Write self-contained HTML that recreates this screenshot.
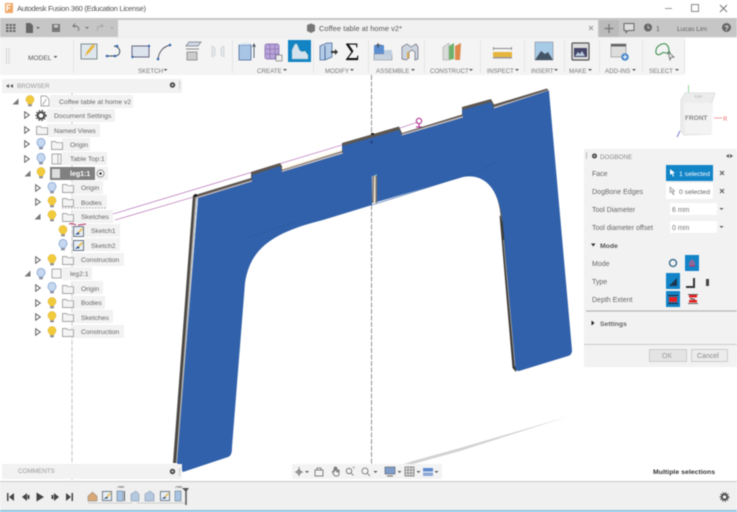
<!DOCTYPE html>
<html><head><meta charset="utf-8"><style>
html,body{margin:0;padding:0;background:#fff;width:737px;height:512px;overflow:hidden}
svg{display:block;filter:blur(.45px)}
text{font-family:"Liberation Sans",sans-serif;font-size:7px;fill:#666}
.t{font-size:6.8px;fill:#666}
.r{font-size:6.2px;fill:#777;text-anchor:middle}
.p{font-size:7px;fill:#666}
</style></head><body>
<svg width="737" height="512" viewBox="0 0 737 512" xmlns="http://www.w3.org/2000/svg">
<defs>
<symbol id="by" viewBox="0 0 10 12" overflow="visible"><path d="M5 .5a4 4 0 0 1 2.4 7.2L7 9H3l-.4-1.300A4 4 0 0 1 5 .5z" fill="#f2cb3c" stroke="#d8b030" stroke-width=".5"/><rect x="3.200" y="9.300" width="3.600" height="2" fill="#888"/></symbol>
<symbol id="bb" viewBox="0 0 10 12" overflow="visible"><path d="M5 .5a4 4 0 0 1 2.4 7.2L7 9H3l-.4-1.300A4 4 0 0 1 5 .5z" fill="#c6d8f0" stroke="#7d9fd0" stroke-width=".7"/><rect x="3.200" y="9.300" width="3.600" height="2" fill="#889"/></symbol>
<symbol id="fo" viewBox="0 0 12 10" overflow="visible"><path d="M.5 1.500h4l1 1.200h6v6.800H.5z" fill="#f4f4f4" stroke="#888" stroke-width=".7"/></symbol>
<symbol id="tr" viewBox="0 0 6 8" overflow="visible"><path d="M.7.700L5.300 4 .7 7.300z" fill="#fff" stroke="#555" stroke-width=".9"/></symbol>
<symbol id="te" viewBox="0 0 7 7" overflow="visible"><path d="M6.500.5v6H.5z" fill="#777"/></symbol>
<symbol id="sk" viewBox="0 0 11 11" overflow="visible"><rect x=".5" y=".5" width="10" height="10" fill="#e8eef6" stroke="#456" stroke-width=".8"/><path d="M2 9l3-3 2 2z" fill="#2c4f8f"/><path d="M5 6l4-4 1 1-4 4z" fill="#e8b52c"/></symbol>
</defs>

<rect width="737" height="512" fill="#fff"/>

<!-- Title bar -->
<rect x="5" y="3" width="8" height="10" fill="#f0a868"/>
<path d="M7 11V5h4M7 8h3" stroke="#fff" stroke-width="1.200" fill="none"/>
<text x="17" y="11" style="font-size:7.700px;fill:#555" textLength="129">Autodesk Fusion 360 (Education License)</text>
<path d="M665 8.500h7" stroke="#999"/>
<rect x="691.500" y="4.500" width="7" height="7" fill="none" stroke="#888"/>
<path d="M720 5l7 7M727 5l-7 7" stroke="#777"/>

<!-- Dark toolbar -->
<rect y="18" width="737" height="19" fill="#c6c6c6"/>
<rect x="118" y="20" width="480" height="17" fill="#f1f1f1"/>
<rect x="0" y="37" width="737" height="1" fill="#eee"/>
<g fill="#666"><rect x="6" y="24" width="2.500" height="2"/><rect x="9.500" y="24" width="2.500" height="2"/><rect x="13" y="24" width="2.500" height="2"/><rect x="6" y="27" width="2.500" height="2"/><rect x="9.500" y="27" width="2.500" height="2"/><rect x="13" y="27" width="2.500" height="2"/><rect x="6" y="30" width="2.500" height="2"/><rect x="9.500" y="30" width="2.500" height="2"/><rect x="13" y="30" width="2.500" height="2"/></g>
<path d="M26 23h4.500l2.500 2.500V33h-7z" fill="#666"/><path d="M36 27l2 2 2-2z" fill="#666"/>
<rect x="52" y="24" width="8" height="8" fill="#777"/><rect x="54" y="25" width="4" height="2.500" fill="#ccc"/>
<path d="M77 26h-4l2-2.500M73 26l2 1.500M73.500 26c4-.5 6 1.500 5 5" fill="none" stroke="#777" stroke-width="1"/><path d="M85 27l2 2 2-2z" fill="#777"/>
<path d="M99 26h4l-2-2.500M103 26l-2 1.500M102.500 26c-4-.5-6 1.500-5 5" fill="none" stroke="#aaa" stroke-width="1"/><path d="M110 27l2 2 2-2z" fill="#aaa"/>
<path d="M307 25l4-1.500 4 1.500v6l-4 2-4-2z" fill="#777"/>
<text x="319" y="31" class="t" style="font-size:7.400px;fill:#555" textLength="83">Coffee table at home v2*</text>
<path d="M589 26l4 4M593 26l-4 4" stroke="#999" stroke-width="1"/>
<rect x="599" y="20" width="20" height="17" fill="#bbb"/>
<path d="M609 24v9M604.500 28.500h9" stroke="#777" stroke-width="1.300"/>
<path d="M624 23.500h10v7h-6l-2 2v-2h-2z" fill="#ddd" stroke="#666"/>
<circle cx="648" cy="27.500" r="4" fill="#666"/><path d="M648 25v3h2" stroke="#ddd" fill="none" stroke-width=".7"/>
<text x="656" y="31" style="fill:#666">1</text>
<text x="677" y="31" style="font-size:6.800px;fill:#666" textLength="30">Lucas Lim</text>
<circle cx="726.500" cy="27.500" r="4.500" fill="#666"/><text x="724.500" y="30.500" style="font-size:7px;fill:#eee;font-weight:bold">?</text>

<!-- Ribbon -->
<rect x="0" y="38" width="685" height="37" fill="#f4f4f4"/>
<path d="M6.500 48v16M9 48v16" stroke="#d6d6d6"/>
<text x="28" y="60" style="font-size:6.600px;fill:#555">MODEL</text><path d="M53.500 56l2 2 2-2z" fill="#555"/>
<g stroke="#e4e4e4"><path d="M73.500 40v33M232.500 40v33M313.500 40v33M368.500 40v33M424.500 40v33M480.500 40v33M524.500 40v33M564.500 40v33M599.500 40v33M642.500 40v33M684.500 40v33"/></g>

<!-- sketch icons -->
<rect x="81" y="44" width="16" height="15" fill="#dfe6ee" stroke="#677" stroke-width=".8"/><path d="M85 56l2-5 6-7 2 2-6 7z" fill="#e8b840"/>
<path d="M107 56h8c6 0 7-9-1-10" fill="none" stroke="#345" stroke-width=".9"/><circle cx="107" cy="56" r="1.300" fill="#3567b0"/><circle cx="115" cy="56" r="1.300" fill="#3567b0"/><circle cx="117" cy="46" r="1.300" fill="#3567b0"/>
<rect x="132" y="46" width="17" height="11" fill="#dde4ee" stroke="#446" stroke-width=".8"/><circle cx="132.500" cy="57" r="1.200" fill="#3567b0"/><circle cx="149" cy="46" r="1.200" fill="#3567b0"/>
<path d="M158 59c1-8 6-13 13-14" fill="none" stroke="#445" stroke-width=".9"/><circle cx="158" cy="59" r="1.300" fill="#3567b0"/><circle cx="170" cy="45" r="1.300" fill="#3567b0"/>
<path d="M186 46l3-4h12l-3 4z" fill="#cfd8e4" stroke="#778" stroke-width=".7"/><rect x="187" y="52" width="10" height="8" fill="#ccc" stroke="#777" stroke-width=".7"/><path d="M186 49h13" stroke="#888"/>
<path d="M212 46v11l3-2v-7zM224 46v11l-3-2v-7z" fill="#e3e7ec" stroke="#ccc" stroke-width=".7"/>
<text x="138" y="73" style="font-size:6.200px;fill:#777">SKETCH</text><path d="M163.500 69l2 2 2-2z" fill="#555"/>
<!-- create -->
<rect x="239" y="45" width="12" height="15" fill="#a9c5e6" stroke="#4a6c99" stroke-width=".8"/><path d="M239 45l3-2h9l-1 2z" fill="#d5e3f3"/><path d="M254 58V45M252.500 47l1.500-3 1.500 3" stroke="#345" fill="none" stroke-width=".8"/>
<rect x="265" y="44" width="14" height="15" rx="2" fill="#b8a4d8" stroke="#7a5ea8" stroke-width=".7"/><path d="M265 49h14M265 54h14M270 44v15M275 44v15" stroke="#7a5ea8" stroke-width=".5"/><rect x="276" y="55" width="6" height="6" fill="#eee" stroke="#666" stroke-width=".6"/>
<rect x="288" y="40" width="23" height="22" fill="#1284c4"/>
<path d="M292 59v-9l3-6h2l2 5c1 3 4 3 6 2l3 4v4z" fill="#d5e3ee" stroke="#9bb" stroke-width=".5"/>
<text x="257" y="73" style="font-size:6.200px;fill:#777">CREATE</text><path d="M283 69l2 2 2-2z" fill="#555"/>
<!-- modify -->
<path d="M320 46l7-3h5v14l-7 3h-5z" fill="#b3cbe7" stroke="#4a6c99" stroke-width=".8"/><path d="M325 46v14" stroke="#4a6c99"/><path d="M331 51h4v-2l3 3-3 3v-2h-4z" fill="#333"/>
<text x="345" y="60" style="font-size:25px;fill:#111;font-family:'Liberation Serif',serif">Σ</text>
<text x="325" y="73" style="font-size:6.200px;fill:#777">MODIFY</text><path d="M350 69l2 2 2-2z" fill="#555"/>
<!-- assemble -->
<rect x="374" y="45" width="10" height="9" fill="#5b8ed0"/><path d="M374 54h18v6h-18z" fill="#c8d3e0" stroke="#889" stroke-width=".6"/><rect x="384" y="50" width="8" height="6" fill="#c0cfe0"/><path d="M378 43v5M376 45h5" stroke="#333" stroke-width=".8"/>
<path d="M402 59v-12l5-3 4 3 5-3 2 3v12l-3 1v-8l-3-2-3 2v6l-3 2z" fill="#ccd5df" stroke="#667" stroke-width=".7"/><path d="M408 52v6" stroke="#d8a848" stroke-width="2"/>
<text x="376" y="73" style="font-size:6.200px;fill:#777">ASSEMBLE</text><path d="M411 69l2 2 2-2z" fill="#555"/>
<!-- construct -->
<path d="M443 47l6-4v17l-6 0z" fill="#d8dbd8" stroke="#999" stroke-width=".5"/><path d="M449 46l5-3v16l-5 1z" fill="#6fb16c"/><path d="M455 46l6-3-1 17-5 0z" fill="#de8a4c"/>
<text x="430" y="73" style="font-size:6.200px;fill:#777">CONSTRUCT</text><path d="M469 69l2 2 2-2z" fill="#555"/>
<!-- inspect -->
<path d="M493.500 47v3M511.500 47v3M494 48.500h17" stroke="#666" stroke-width=".7"/><rect x="493" y="52" width="19" height="5" fill="#e6b53c"/><rect x="493" y="57" width="19" height="1.500" fill="#999"/>
<text x="487" y="73" style="font-size:6.200px;fill:#777">INSPECT</text><path d="M515 69l2 2 2-2z" fill="#555"/>
<!-- insert -->
<rect x="535" y="42" width="18" height="18" fill="#a7cbe6" stroke="#889" stroke-width=".6"/><path d="M535 60l6-9 4 3 3-2 5 8z" fill="#456"/>
<text x="531" y="73" style="font-size:6.200px;fill:#777">INSERT</text><path d="M554 69l2 2 2-2z" fill="#555"/>
<!-- make -->
<rect x="572" y="43" width="17" height="17" rx="1" fill="#ddd" stroke="#555" stroke-width="1.200"/><rect x="574" y="48" width="13" height="9" fill="#446"/><path d="M575 56l3-4 2 2 2-3 3 5z" fill="#bcd"/>
<text x="569" y="73" style="font-size:6.200px;fill:#777">MAKE</text><path d="M588 69l2 2 2-2z" fill="#555"/>
<!-- add-ins -->
<rect x="611" y="44" width="15" height="13" fill="#ddd" stroke="#888" stroke-width=".6"/><rect x="611" y="44" width="15" height="2.500" fill="#666"/><circle cx="625" cy="57" r="3.800" fill="#4a8ac8"/><path d="M625 55v4M623 57h4" stroke="#fff"/>
<text x="605" y="73" style="font-size:6.200px;fill:#777">ADD-INS</text><path d="M632 69l2 2 2-2z" fill="#555"/>
<!-- select -->
<path d="M656 50c1-5 8-8 11-5s1 6 3 8c-3 2-5-2-8 0-3 3-7 2-6-3z" fill="none" stroke="#3b8f4d" stroke-width="1.100"/><path d="M668 52l6 5-3 .5-1 2.500z" fill="#eee" stroke="#555" stroke-width=".7"/>
<text x="649" y="73" style="font-size:6.200px;fill:#777">SELECT</text><path d="M675 69l2 2 2-2z" fill="#555"/>

<!-- Canvas axes -->
<path d="M371.500 75V470" stroke="#777" stroke-width=".8" stroke-dasharray="5 1.500"/>
<path d="M72 93V480" stroke="#aaa" stroke-width=".7" stroke-dasharray="5 1.500"/>
<path d="M688.500 85v8" stroke="#8fd79a" stroke-width="1"/>

<!-- Ground shadow -->
<path d="M568 416.500L460 448 413 461 357 479 413 464 460 451z" fill="#d2d2d2"/>

<!-- Magenta sketch lines -->
<path d="M113 214L342 145M400 128L418 122M115 220L197 196" fill="none" stroke="#a855a8" stroke-width=".6"/>
<circle cx="419" cy="121" r="2.700" fill="none" stroke="#b0258f" stroke-width="1"/><path d="M416 127h6M419 124v3" stroke="#b0258f"/>

<!-- Part top side bands -->
<path d="M195 195L251 178V172L280 163 282 166 282 171 197 198z" fill="#5d5650"/>
<path d="M282 169.500L342 151V143L399 126.500 402 133 402 135 282 172z" fill="#5d5650"/>
<path d="M402 133L462 114.500V107L491 99 494 104.500 547 88.500 549 91 402 136z" fill="#5d5650"/>
<path d="M197 197L251 180.500 252 182 197 199zM282 170.500L342 152 343 154 282 172.500zM402 134L463 116 463 118 402 136zM494 107L548 90 548 92 494 109z" fill="#c9bfc0"/>
<path d="M283 167.500L342 149 342 151 283 169.500z" fill="#fff8e8"/>
<path d="M193 195L173 463 177 463 197 197z" fill="#4b4844"/>
<path d="M195.500 196L176 463 178 463 197 197z" fill="#b8b8b8"/>
<path d="M499.500 215L512.500 368 516 372 517 368 504 222z" fill="#3f3c38"/>
<path d="M489 184C496 192 500 204 501 220L503.500 222C502 204 498 192 491 185z" fill="#555"/>

<!-- Blue face -->
<path d="M198 198L252 181.500V175L280 166 282 172 343 153.500 342 146 399 130 402 135.500 463 117.500 462 110 491 102 494 108.500 547 91 549 91 572 350C572 353 571 355 568 356L519 371C517 371 516 370 515 367L503 225C501 198 490 172 463 177L377 202V176H372V205L323 220C270 233 250 250 245 283L232 447C232 453 231 456 228 457L183 472 177 463z" fill="#3161aa"/>
<path d="M247 238L295 222M372 205L477 172 497 162" fill="none" stroke="#2d5a9f" stroke-width=".6"/>
<path d="M503.500 240L515 366" stroke="#aaa" stroke-width=".8"/>
<path d="M372.500 176h4.500v27h-5z" fill="#7a7268"/><path d="M374 176h1.500v27H373.500z" fill="#e8e0d0"/>
<rect x="371" y="133" width="3" height="2" fill="#222"/><circle cx="371.500" cy="142" r="1.500" fill="#24468a"/>
<circle cx="195.500" cy="195.500" r="1.500" fill="#111"/>
<path d="M374 176l3-1" stroke="#9cc" stroke-width="1"/>

<!-- View cube -->
<path d="M681 100l4-7h30l-3 9-1 32-27 1-3-4z" fill="#ececec" stroke="#e0e0e0"/>
<path d="M684 103h28v31h-27z" fill="#f3f3f3"/>
<text x="685" y="120" style="font-size:6.500px;font-weight:bold;fill:#888">FRONT</text>
<text x="694" y="98" style="font-size:4px;fill:#aaa">TOP</text>
<path d="M714 118h8" stroke="#f0a0a0" stroke-width="1"/><text x="723" y="121" style="font-size:6px;fill:#e87070">R</text>
<path d="M680 131l-3 6" stroke="#7878d8" stroke-width="1"/>

<!-- Browser -->
<rect x="2" y="79" width="180" height="14" fill="#f2f2f2"/>
<path d="M6 86l3-2v4zM10 86l3-2v4z" fill="#555"/>
<text x="17" y="88" style="font-size:6.300px;fill:#999">BROWSER</text>
<circle cx="172.500" cy="85" r="2.700" fill="#444"/><circle cx="172.500" cy="85" r="1" fill="#ddd"/><path d="M179.500 81v8" stroke="#ccc"/>

<g fill="#f2f2f2">
<rect x="50" y="95" width="83" height="13"/>
<rect x="47" y="109" width="68" height="13"/>
<rect x="47" y="124" width="53" height="13"/>
<rect x="62" y="138" width="28" height="13"/>
<rect x="62" y="152" width="45" height="13"/>
<rect x="96" y="167" width="12" height="13"/>
<rect x="72" y="181" width="31" height="13"/>
<rect x="72" y="195" width="35" height="13"/>
<rect x="72" y="210" width="41" height="13"/>
<rect x="84" y="224" width="36" height="13"/>
<rect x="84" y="238" width="36" height="13"/>
<rect x="72" y="253" width="52" height="13"/>
<rect x="62" y="267" width="30" height="13"/>
<rect x="72" y="281" width="31" height="13"/>
<rect x="72" y="296" width="33" height="13"/>
<rect x="72" y="310" width="41" height="13"/>
<rect x="72" y="325" width="52" height="13"/>
</g>
<rect x="50" y="167" width="45" height="13" fill="#808080"/>

<use href="#te" x="12" y="98" width="7" height="7"/><use href="#by" x="25" y="95" width="10" height="12"/>
<path d="M41 96h5l3 3v7h-8z" fill="#fff" stroke="#888" stroke-width=".7"/><path d="M43 105c0-3 3-3 3-6" stroke="#777" fill="none" stroke-width=".6"/>
<text x="59" y="104" class="t">Coffee table at home v2</text>

<use href="#tr" x="24" y="111" width="6" height="8"/>
<circle cx="41" cy="115.500" r="3.300" fill="none" stroke="#444" stroke-width="2"/><circle cx="41" cy="115.500" r="5" fill="none" stroke="#444" stroke-width="1.200" stroke-dasharray="1.500 1.500"/>
<text x="54" y="118" class="t">Document Settings</text>

<use href="#tr" x="24" y="126" width="6" height="8"/><use href="#fo" x="36" y="125" width="12" height="10"/>
<text x="54" y="133" class="t">Named Views</text>

<use href="#tr" x="24" y="140" width="6" height="8"/><use href="#bb" x="36" y="138" width="10" height="12"/><use href="#fo" x="51" y="140" width="12" height="10"/>
<text x="70" y="147" class="t">Origin</text>

<use href="#tr" x="24" y="155" width="6" height="8"/><use href="#bb" x="36" y="153" width="10" height="12"/>
<rect x="52" y="154" width="9" height="10" fill="#f6f6f6" stroke="#888" stroke-width=".7"/><path d="M58 154v10" stroke="#888" stroke-width=".6"/>
<text x="70" y="161" class="t">Table Top:1</text>

<use href="#te" x="24" y="170" width="7" height="7"/><use href="#by" x="36" y="167" width="10" height="12"/>
<rect x="52" y="169" width="8" height="9" fill="#ddd"/>
<text x="70" y="176" style="font-size:7px;font-weight:bold;fill:#fff">leg1:1</text>
<circle cx="100.500" cy="173.500" r="3.500" fill="#fff" stroke="#666" stroke-width=".7"/><circle cx="100.500" cy="173.500" r="1.300" fill="#333"/>

<use href="#tr" x="35" y="184" width="6" height="8"/><use href="#bb" x="47" y="182" width="10" height="12"/><use href="#fo" x="62" y="183" width="12" height="10"/>
<text x="81" y="190" class="t">Origin</text>

<use href="#tr" x="35" y="198" width="6" height="8"/><use href="#by" x="47" y="196" width="10" height="12"/><use href="#fo" x="62" y="197" width="12" height="10"/>
<text x="81" y="205" class="t">Bodies</text>
<path d="M62 208h44" stroke="#888" stroke-width=".8" stroke-dasharray="1.500 1.500"/>

<use href="#te" x="34" y="213" width="7" height="7"/><use href="#by" x="47" y="210" width="10" height="12"/><use href="#fo" x="62" y="212" width="12" height="10"/>
<text x="81" y="219" class="t">Sketches</text>
<path d="M69 224c3-1 5 0 7 1M78 225l8-1" stroke="#b02a60" stroke-width="1" fill="none"/>

<use href="#by" x="58" y="225" width="10" height="12"/><use href="#sk" x="73" y="226" width="11" height="11"/>
<text x="91" y="233" class="t">Sketch1</text>
<use href="#bb" x="58" y="239" width="10" height="12"/><use href="#sk" x="73" y="240" width="11" height="11"/>
<text x="91" y="248" class="t">Sketch2</text>

<use href="#tr" x="35" y="256" width="6" height="8"/><use href="#by" x="47" y="254" width="10" height="12"/><use href="#fo" x="62" y="255" width="12" height="10"/>
<text x="81" y="262" class="t">Construction</text>

<use href="#te" x="24" y="270" width="7" height="7"/><use href="#bb" x="36" y="268" width="10" height="12"/>
<rect x="52" y="269" width="9" height="9" fill="#f6f6f6" stroke="#888" stroke-width=".7"/>
<text x="70" y="276" class="t">leg2:1</text>

<use href="#tr" x="35" y="284" width="6" height="8"/><use href="#bb" x="47" y="282" width="10" height="12"/><use href="#fo" x="62" y="284" width="12" height="10"/>
<text x="81" y="291" class="t">Origin</text>
<use href="#tr" x="35" y="299" width="6" height="8"/><use href="#by" x="47" y="297" width="10" height="12"/><use href="#fo" x="62" y="298" width="12" height="10"/>
<text x="81" y="305" class="t">Bodies</text>
<use href="#tr" x="35" y="313" width="6" height="8"/><use href="#by" x="47" y="311" width="10" height="12"/><use href="#fo" x="62" y="312" width="12" height="10"/>
<text x="81" y="320" class="t">Sketches</text>
<use href="#tr" x="35" y="328" width="6" height="8"/><use href="#by" x="47" y="326" width="10" height="12"/><use href="#fo" x="62" y="327" width="12" height="10"/>
<text x="81" y="334" class="t">Construction</text>

<!-- Dogbone panel -->
<rect x="584" y="149" width="153" height="218" fill="#f2f2f2"/>
<path d="M586.500 152v7" stroke="#bbb"/>
<circle cx="594.500" cy="156" r="2.500" fill="#444"/><circle cx="594.500" cy="156" r=".9" fill="#ddd"/>
<text x="600" y="159" style="font-size:6.300px;fill:#888">DOGBONE</text>
<path d="M726 156l3-2v4zM730 154l3 2-3 2z" fill="#555"/>

<text x="592" y="176" class="p">Face</text>
<rect x="666" y="165" width="47" height="16" fill="#1284c8"/>
<path d="M670 169l5 4-2 .3 1 3-1 .4-1-3-2 1z" fill="#fff"/>
<text x="679" y="176" style="font-size:6.800px;fill:#fff">1 selected</text>
<path d="M720 171l4 4M724 171l-4 4" stroke="#555" stroke-width="1"/>

<text x="592" y="194" class="p">DogBone Edges</text>
<rect x="666" y="183" width="47" height="16" fill="#fff"/>
<path d="M670 187l5 4-2 .3 1 3-1 .4-1-3-2 1z" fill="#ddd" stroke="#777" stroke-width=".5"/>
<text x="679" y="194" style="font-size:6.800px;fill:#666">0 selected</text>
<path d="M720 189l4 4M724 189l-4 4" stroke="#555" stroke-width="1"/>

<text x="592" y="212" class="p">Tool Diameter</text>
<rect x="670" y="203" width="47" height="12" fill="#fff"/><text x="672" y="212" class="p" style="fill:#777">6 mm</text>
<path d="M719.500 208l2 2 2-2z" fill="#555"/>
<text x="592" y="230" class="p">Tool diameter offset</text>
<rect x="670" y="221" width="47" height="12" fill="#fff"/><text x="672" y="230" class="p" style="fill:#777">0 mm</text>
<path d="M719.500 226l2 2 2-2z" fill="#555"/>

<path d="M591 243.500l4.500 0-2.250 3z" fill="#333"/>
<text x="600" y="248" style="font-size:6.800px;font-weight:bold;fill:#555">Mode</text>

<text x="592" y="266" class="p">Mode</text>
<circle cx="673" cy="263" r="3.500" fill="none" stroke="#2b5f86" stroke-width="1.300"/>
<rect x="685" y="255" width="14" height="16" fill="#1284c8"/><path d="M689 266v-4l3-3 3 3v4z" fill="#8a6a9a"/><path d="M690 266h5" stroke="#e02060"/>

<text x="592" y="284" class="p">Type</text>
<rect x="666" y="273" width="14" height="16" fill="#1284c8"/><path d="M669 286l8-8v8z" fill="#1b3550"/>
<path d="M686 286h7v-8h2v10h-9z" fill="#333"/>
<rect x="706" y="279" width="3" height="7" fill="#444"/>

<text x="592" y="302" class="p">Depth Extent</text>
<rect x="666" y="291" width="14" height="16" fill="#1284c8"/><rect x="669" y="297" width="8" height="5" fill="#e82020"/><path d="M668 295.500h10M668 303.500h10" stroke="#223"/>
<rect x="689" y="295" width="8" height="2.500" fill="#e82020"/><rect x="689" y="300" width="8" height="2.500" fill="#e82020"/><path d="M688 294.500h10M688 303.500h10" stroke="#333" stroke-width=".8"/><path d="M690 298.500l5 1" stroke="#333"/>

<path d="M586 311h160" stroke="#b8b8b8" stroke-width="1.200"/>
<path d="M591.500 320.500l0 5 3-2.500z" fill="#222"/>
<text x="600" y="326" style="font-size:6.800px;font-weight:bold;fill:#666">Settings</text>

<path d="M584 344.500h153" stroke="#ccc"/>
<rect x="649.500" y="349.500" width="37" height="12" fill="#e4e4e4" stroke="#ccc"/><text x="662" y="358" class="p" style="fill:#999">OK</text>
<rect x="691.500" y="349.500" width="36" height="12" fill="#ececec" stroke="#ccc"/><text x="697" y="358" class="p" style="fill:#888">Cancel</text>

<!-- Comments -->
<rect x="2" y="464" width="180" height="15" fill="#f2f2f2"/>
<text x="18" y="473" style="font-size:6.300px;fill:#999">COMMENTS</text>
<circle cx="172.500" cy="471.500" r="2.700" fill="#444"/><circle cx="172.500" cy="471.500" r="1" fill="#ddd"/><path d="M179.500 468v8" stroke="#ccc"/>

<!-- Nav bar -->
<rect x="292" y="464" width="150" height="15" fill="#f3f3f3"/>
<g stroke="#666" fill="none" stroke-width=".8">
<path d="M299 467v9M295 472h8"/><circle cx="299" cy="472" r="2"/>
<rect x="315" y="470" width="8" height="6"/><path d="M317 470v-2h4v2"/>
<path d="M335 476c-2-2-3-4-2-5l1 1v-4h1v3-4h1v4-3h1v4h1v-2h1v4c0 2-1 2-2 2z"/>
<circle cx="349" cy="471" r="2.700"/><path d="M351 473l2.500 2.500M353 467l1.500 1"/>
<circle cx="365" cy="471" r="3"/><path d="M367 473l3 3"/>
</g>
<g fill="#555"><path d="M305 471l2 2 2-2zM373.500 471l2 2 2-2zM397.500 471l2 2 2-2zM416.500 471l2 2 2-2zM434.500 471l2 2 2-2z"/></g>
<rect x="385" y="467" width="10" height="7" fill="#7d9cc8" stroke="#556" stroke-width=".6"/><path d="M387 476h6" stroke="#666"/>
<rect x="405" y="467" width="9" height="9" fill="#ddd" stroke="#666" stroke-width=".7"/><path d="M408 467v9M411 467v9M405 470h9M405 473h9" stroke="#666" stroke-width=".5"/>
<rect x="423" y="468" width="10" height="3.500" fill="#5e8ad0"/><rect x="423" y="472.500" width="10" height="3.500" fill="#8ea8d8"/>

<text x="653" y="474" style="font-size:6.800px;fill:#333;font-weight:bold" textLength="62">Multiple selections</text>

<!-- Timeline -->
<rect y="481" width="737" height="1" fill="#c8c8c8"/>
<rect y="482" width="737" height="28" fill="#f0f0f0"/>
<rect y="510" width="737" height="2" fill="#8cc4e2"/>
<g fill="#444">
<path d="M7 493h1.500v8H7zM14 493v8l-5-4z"/>
<path d="M22 497l5-4v8zM27.500 495h2v4h-2z"/>
<path d="M36.500 492.500l7.500 4.500-7.500 4.500z"/>
<path d="M51.500 495h2v4h-2zM54 493l5 4-5 4z"/>
<path d="M66 493l5 4-5 4zM71.500 493h1.500v8h-1.500z"/>
</g>
<path d="M88 503h44M137 503h49" stroke="#ccc"/>
<path d="M88 496l4.500-4 4.500 4v5h-9z" fill="#d8a878" stroke="#777" stroke-width=".5"/>
<use href="#sk" x="102" y="491" width="10" height="10"/>
<rect x="117" y="491" width="6" height="10" fill="#a8c4e4" stroke="#567" stroke-width=".5"/><path d="M124.500 491v10" stroke="#555"/><path d="M117 488l2-2 1 2 1-2 1 2 1-2 1 2" stroke="#555" fill="none" stroke-width=".5"/>
<path d="M131 494l5-3 3 3v7h-8z" fill="#b4c8e0" stroke="#789" stroke-width=".5"/>
<path d="M145 494l5-3 4 3v7h-9z" fill="#b4c8e0" stroke="#789" stroke-width=".5"/>
<use href="#sk" x="160" y="491" width="10" height="10"/>
<rect x="175" y="491" width="6" height="10" fill="#a8c4e4" stroke="#567" stroke-width=".5"/><path d="M175 488l2-2 1 2 1-2 1 2 1-2 1 2" stroke="#555" fill="none" stroke-width=".5"/>
<path d="M182 488h7l-3 4z" fill="#555"/><path d="M186 490v15" stroke="#555" stroke-width="1.500"/>
<circle cx="724.500" cy="497" r="2.700" fill="none" stroke="#444" stroke-width="1.800"/><circle cx="724.500" cy="497" r="4.300" fill="none" stroke="#444" stroke-width="1" stroke-dasharray="1.300 1.300"/>
</svg>
</body></html>
